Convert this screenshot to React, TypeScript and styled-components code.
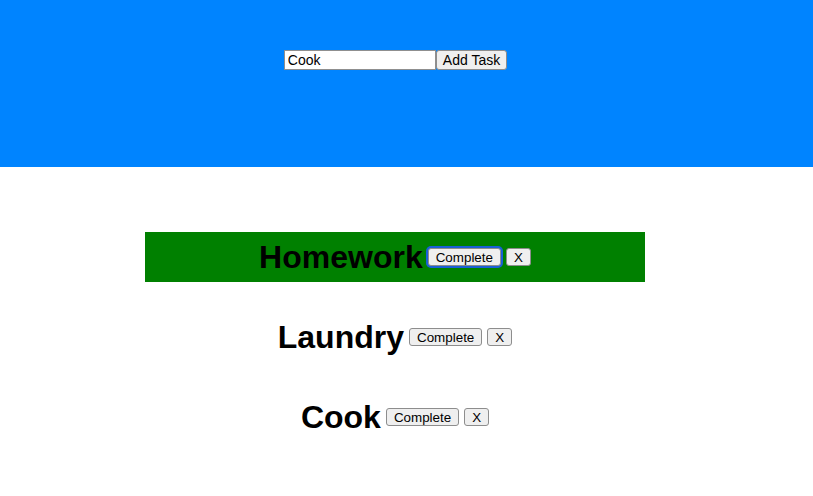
import React, { useState } from "react";
import styled, { createGlobalStyle } from "styled-components";

const GlobalStyle = createGlobalStyle`
    body {
        margin: 0;
        font-family: "Liberation Sans", Arial, sans-serif;
        background: #fff;
    }
`;

const Header = styled.header`
    background-color: #0084ff;
    height: 167px;
`;

const HeaderInner = styled.form`
    width: 791px;
    display: flex;
    justify-content: center;
    padding-top: 50px;
`;

const TaskInput = styled.input`
    box-sizing: border-box;
    width: 152px;
    height: 20px;
    padding: 0 3px;
    border: 1px solid #8f8f8f;
    font-family: "Liberation Sans", Arial, sans-serif;
    font-size: 14px;
    color: #000;
    outline: none;
`;

const Button = styled.button<{ $focused?: boolean; $size?: "big" | "small" }>`
    box-sizing: border-box;
    height: ${(p) => (p.$size === "big" ? "20px" : "18px")};
    padding: ${(p) => (p.$size === "big" ? "0 6px" : "0 7px")};
    background: #efefef;
    border: 1px solid #8d8d8d;
    border-radius: 3px;
    font-family: "Liberation Sans", Arial, sans-serif;
    font-size: ${(p) => (p.$size === "big" ? "14px" : "13.4px")};
    color: #000;
    cursor: pointer;
    ${(p) => p.$focused && `box-shadow: 0 0 0 2px #1a5fd6;`}
`;

const Main = styled.main`
    width: 790px;
    padding-top: 65px;
`;

const TaskList = styled.ul`
    width: 500px;
    margin: 0 auto;
    padding: 0;
    list-style: none;
    display: flex;
    flex-direction: column;
    gap: 30px;
`;

const TaskRow = styled.li<{ $done: boolean }>`
    height: 50px;
    display: flex;
    align-items: center;
    justify-content: center;
    gap: 5px;
    background-color: ${(p) => (p.$done ? "#008000" : "transparent")};
`;

const TaskName = styled.h1`
    margin: 0;
    font-size: 32px;
    font-weight: bold;
    color: #000;
`;

type Task = { name: string; done: boolean };

export default function App() {
    const [text, setText] = useState("Cook");
    const [tasks, setTasks] = useState<Task[]>([
        { name: "Homework", done: true },
        { name: "Laundry", done: false },
        { name: "Cook", done: false },
    ]);

    const addTask = (e: React.FormEvent) => {
        e.preventDefault();
        if (!text.trim()) return;
        setTasks([...tasks, { name: text, done: false }]);
    };

    return (
        <>
            <GlobalStyle />
            <Header>
                <HeaderInner onSubmit={addTask}>
                    <TaskInput value={text} onChange={(e) => setText(e.target.value)} />
                    <Button type="submit" $size="big">Add Task</Button>
                </HeaderInner>
            </Header>
            <Main>
                <TaskList>
                    {tasks.map((t, i) => (
                        <TaskRow key={i} $done={t.done}>
                            <TaskName>{t.name}</TaskName>
                            <Button
                                $focused={i === 0}
                                onClick={() =>
                                    setTasks(tasks.map((x, j) => (j === i ? { ...x, done: !x.done } : x)))
                                }
                            >
                                Complete
                            </Button>
                            <Button onClick={() => setTasks(tasks.filter((_, j) => j !== i))}>X</Button>
                        </TaskRow>
                    ))}
                </TaskList>
            </Main>
        </>
    );
}
